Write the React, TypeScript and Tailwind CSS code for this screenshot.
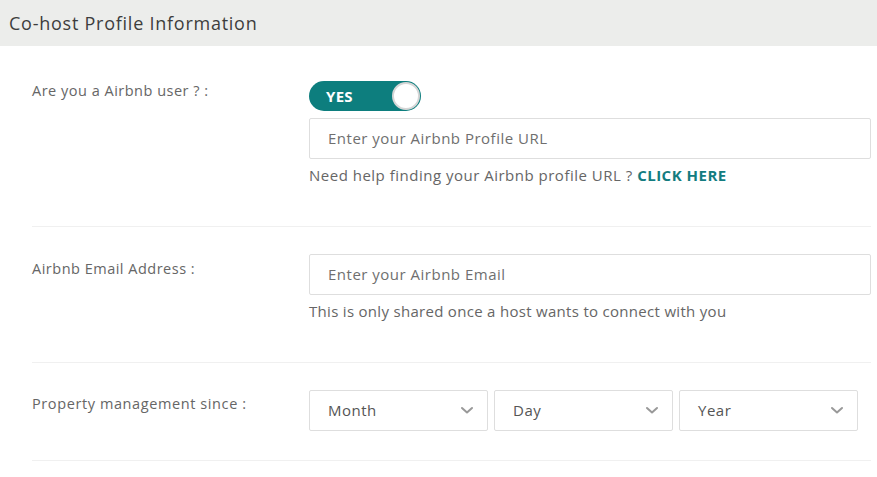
import React from "react";

const font = { fontFamily: '"Open Sans", "Noto Sans", sans-serif' };

function Chevron() {
  return (
    <svg width="14" height="9" viewBox="0 0 14 9" fill="none">
      <path d="M2 2 L7 6.5 L12 2" stroke="#999999" strokeWidth="2" strokeLinecap="round" strokeLinejoin="round" />
    </svg>
  );
}

function Select({ label }: { label: string }) {
  return (
    <div className="w-[179px] h-[41px] border border-[#dedede] rounded-[2px] flex items-center justify-between pl-[18px] pr-[13px] bg-white">
      <span className="text-[15px] text-[#555] tracking-[0.5px]">{label}</span>
      <Chevron />
    </div>
  );
}

export default function App() {
  return (
    <div className="w-[877px] h-[477px] bg-white overflow-hidden" style={font}>
      <div className="h-[46px] bg-[#ecedeb] flex items-center pl-[9px]">
        <span className="text-[18px] text-[#3d3d3d] tracking-[0.75px]">Co-host Profile Information</span>
      </div>
      <div className="pl-[32px] pr-[6px]">
        <div className="flex pt-[35px] pb-[40px] border-b border-[#f0f0f0]">
          <div className="w-[277px] text-[14.5px] text-[#666] leading-[20px] tracking-[0.5px]">Are you a Airbnb user ? :</div>
          <div className="flex-1 flex flex-col">
            <div className="w-[112px] h-[30px] rounded-full bg-[#0d7e7e] flex items-center justify-between pl-[17px] pr-[1px]">
              <span className="text-white font-bold text-[15px] tracking-[0.3px]">YES</span>
              <div className="w-[28px] h-[28px] rounded-full bg-white border-2 border-[#d6d6d6]" />
            </div>
            <div className="mt-[7px] h-[41px] border border-[#dedede] rounded-[2px] flex items-center pl-[18px] text-[15px] text-[#6f6f6f] tracking-[0.5px]">
              Enter your Airbnb Profile URL
            </div>
            <div className="mt-[5px] text-[15px] text-[#666] leading-[22px] tracking-[0.5px]">
              Need help finding your Airbnb profile URL ?{" "}
              <span className="font-bold text-[#137c80]">CLICK HERE</span>
            </div>
          </div>
        </div>
        <div className="flex pt-[27px] pb-[40px] border-b border-[#f0f0f0]">
          <div className="w-[277px] text-[14.5px] text-[#666] pt-[5px] leading-[20px] tracking-[0.5px]">Airbnb Email Address :</div>
          <div className="flex-1 flex flex-col">
            <div className="h-[41px] border border-[#dedede] rounded-[2px] flex items-center pl-[18px] text-[15px] text-[#6f6f6f] tracking-[0.5px]">
              Enter your Airbnb Email
            </div>
            <div className="mt-[5px] text-[15px] text-[#666] leading-[22px] tracking-[0.3px]">
              This is only shared once a host wants to connect with you
            </div>
          </div>
        </div>
        <div className="flex pt-[27px] pb-[29px] border-b border-[#f0f0f0]">
          <div className="w-[277px] text-[14.5px] text-[#666] pt-[4px] leading-[20px] tracking-[0.6px]">Property management since :</div>
          <div className="flex gap-[6px]">
            <Select label="Month" />
            <Select label="Day" />
            <Select label="Year" />
          </div>
        </div>
      </div>
    </div>
  );
}
